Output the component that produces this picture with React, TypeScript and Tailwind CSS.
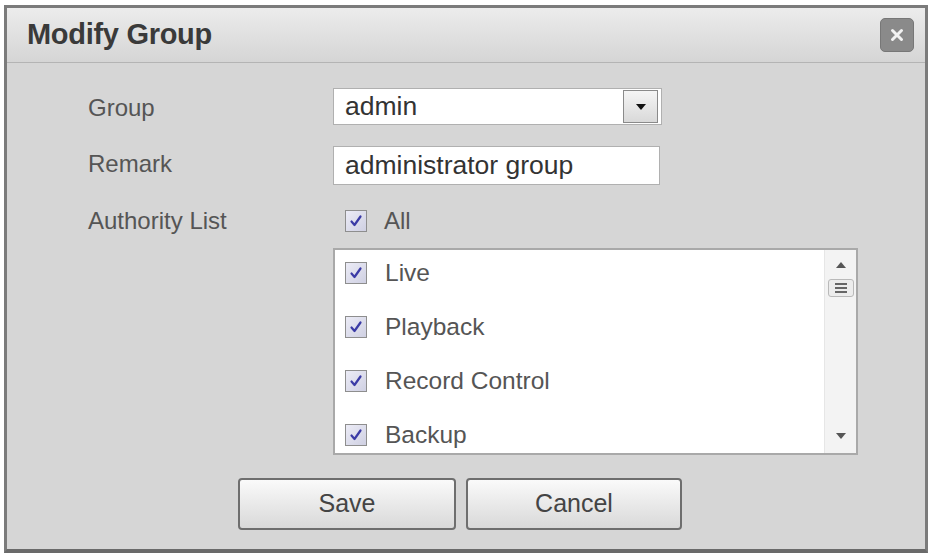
import React from 'react';

// Checked checkbox in the old IE style
function CheckBox() {
  return (
    <div className="w-[22px] h-[22px] border border-[#8e8e8e] bg-gradient-to-br from-[#ececf6] to-[#cfd0e2] flex items-center justify-center shrink-0">
      <svg width="14" height="14" viewBox="0 0 14 14">
        <path d="M2.5 7.5 L5.5 11 L11.5 2.5" fill="none" stroke="#3b3ba6" strokeWidth="2.2" strokeLinecap="round" strokeLinejoin="round" />
      </svg>
    </div>
  );
}

function ListItem({ label }: { label: string }) {
  return (
    <div className="h-[54px] flex items-center pl-[10px] gap-[18px]">
      <CheckBox />
      <span className="text-[24.5px] text-[#555]">{label}</span>
    </div>
  );
}

export default function App() {
  const items = ['Live', 'Playback', 'Record Control', 'Backup'];

  return (
    <div
      className="w-[931px] h-[554px] bg-white pt-[5px] pl-[4px] pr-[3px] pb-[1px]"
      style={{ fontFamily: '"Liberation Sans", Arial, sans-serif' }}
    >
      <div className="h-full flex flex-col border-[3px] border-[#7b7b7b] border-b-[4px] border-b-[#6a6a6a]">
        {/* Title bar */}
        <div className="h-[55px] shrink-0 flex items-center justify-between pl-[20px] pr-[11px] bg-gradient-to-b from-[#ececec] to-[#d5d5d5] border-b border-[#b4b4b4]">
          <span className="text-[29px] font-bold text-[#3a3a3a] tracking-[-0.3px]">Modify Group</span>
          <div className="w-[34px] h-[34px] rounded-[5px] bg-[#8a8a8a] border border-[#777] flex items-center justify-center">
            <svg width="14" height="14" viewBox="0 0 14 14">
              <path d="M2.5 2.5 L11.5 11.5 M11.5 2.5 L2.5 11.5" stroke="#f2f2f2" strokeWidth="3" strokeLinecap="round" />
            </svg>
          </div>
        </div>

        {/* Body */}
        <div className="flex-1 bg-[#d6d6d6] pt-[25px] pl-[81px]">
          <div className="flex items-center h-[37px]">
            <span className="w-[245px] text-[24px] text-[#555] pt-[3px]">Group</span>
            <div className="w-[329px] h-[37px] bg-white border border-[#b0b0b0] flex items-center justify-between pl-[11px] pr-[3px]">
              <span className="text-[26.5px] text-[#333]">admin</span>
              <div className="w-[35px] h-[33px] border border-[#8a8a8a] bg-gradient-to-b from-[#f5f5f5] to-[#d9d9d9] flex items-center justify-center">
                <svg width="12" height="8" viewBox="0 0 12 8">
                  <path d="M1 1 L11 1 L6 7 Z" fill="#111" />
                </svg>
              </div>
            </div>
          </div>

          <div className="flex items-center h-[39px] mt-[21px]">
            <span className="w-[245px] text-[24px] text-[#555] pb-[3px]">Remark</span>
            <div className="w-[327px] h-[39px] bg-white border border-[#b0b0b0] flex items-center pl-[11px]">
              <span className="text-[26.5px] text-[#333]">administrator group</span>
            </div>
          </div>

          <div className="flex items-center h-[34px] mt-[19px]">
            <span className="w-[245px] text-[24px] text-[#555]">Authority List</span>
            <div className="flex items-center gap-[17px] pl-[12px]">
              <CheckBox />
              <span className="text-[24px] text-[#555]">All</span>
            </div>
          </div>

          <div className="flex mt-[10px]">
            <div className="w-[245px]" />
            <div className="w-[525px] h-[207px] bg-white border-2 border-[#a9a9a9] flex overflow-hidden">
              <div className="flex-1 -mt-[4px]">
                {items.map((it) => (
                  <ListItem key={it} label={it} />
                ))}
              </div>
              <div className="w-[32px] bg-[#f3f3f3] border-l border-[#e6e6e6] flex flex-col items-center pt-[12px] pb-[14px]">
                <svg width="10" height="6" viewBox="0 0 10 6">
                  <path d="M0 6 L5 0 L10 6 Z" fill="#555" />
                </svg>
                <div className="mt-[11px] w-[26px] h-[18px] border border-[#b9b9b9] rounded-[3px] bg-[#ececec] flex flex-col items-center justify-center gap-[2px]">
                  <div className="w-[12px] h-[2px] bg-[#666]" />
                  <div className="w-[12px] h-[2px] bg-[#666]" />
                  <div className="w-[12px] h-[2px] bg-[#666]" />
                </div>
                <div className="flex-1" />
                <svg width="10" height="6" viewBox="0 0 10 6">
                  <path d="M0 0 L10 0 L5 6 Z" fill="#555" />
                </svg>
              </div>
            </div>
          </div>

          <div className="flex gap-[10px] mt-[23px] pl-[150px]">
            <button className="w-[218px] h-[52px] rounded-[4px] border-2 border-[#6e6e6e] bg-gradient-to-b from-[#fafafa] to-[#d9d9d9] text-[25px] text-[#444]">
              Save
            </button>
            <button className="w-[216px] h-[52px] rounded-[4px] border-2 border-[#6e6e6e] bg-gradient-to-b from-[#fafafa] to-[#d9d9d9] text-[25px] text-[#444]">
              Cancel
            </button>
          </div>
        </div>
      </div>
    </div>
  );
}
